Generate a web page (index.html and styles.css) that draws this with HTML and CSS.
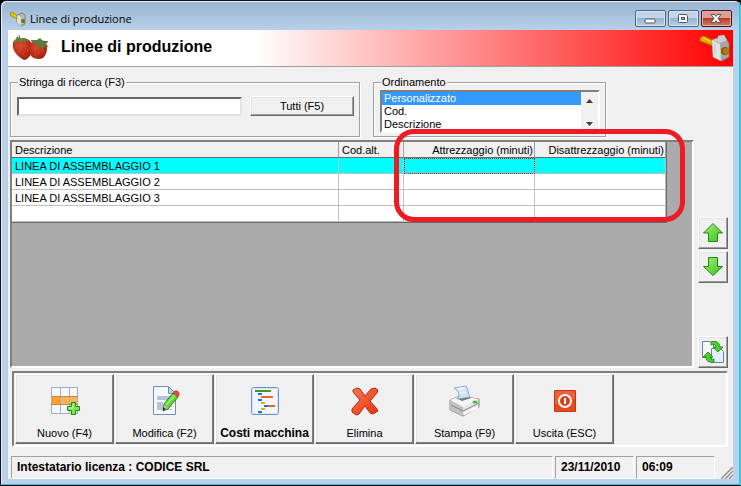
FILE: index.html
```html
<!DOCTYPE html>
<html lang="it">
<head>
  <meta charset="UTF-8" />
  <meta name="viewport" content="width=device-width, initial-scale=1.0"/>
  <title>Linee di produzione</title>
  <link rel="stylesheet" href="styles.css">
</head>
<body>
  <div class="window">
    <div class="titlebar">
      <svg class="app-icon" width="16" height="16" viewBox="0 0 16 16">
        <path d="M0 2l2-1 6 4-1 3-6-3z" fill="#d8c800" stroke="#6a6200" stroke-width=".5"/>
        <path d="M7 4l5-2 3 2v9l-4 2-4-3z" fill="#b8b8b0" stroke="#66665f" stroke-width=".7"/>
        <path d="M7 4l4 2v9l-4-3z" fill="#dcdcd6"/>
        <circle cx="13" cy="10" r="2" fill="#7c7400"/>
      </svg>
      <span class="caption">Linee di produzione</span>
      <button class="win-btn" aria-label="Riduci">
        <svg width="30" height="16" viewBox="0 0 30 16"><rect x="10" y="8" width="10" height="4" rx="1" fill="#fff" stroke="#535666"/></svg>
      </button>
      <button class="win-btn" aria-label="Ingrandisci">
        <svg width="30" height="16" viewBox="0 0 30 16"><rect x="10.500" y="3.500" width="9" height="8" rx="1" fill="#fff" stroke="#535666"/><rect x="13.500" y="6.500" width="3" height="2" fill="#9db8d4" stroke="#535666"/></svg>
      </button>
      <button class="win-btn close" aria-label="Chiudi">
        <svg width="30" height="16" viewBox="0 0 30 16"><path d="M10 3.500h3.500L15 5.500l1.500-2H20L17 7.500l3 4h-3.500l-1.500-2-1.500 2H10l3-4z" fill="#fff" stroke="#535666"/></svg>
      </button>
    </div>

    <div class="client">
      <div class="header">
        <svg width="40" height="28" viewBox="0 0 40 28">
          <defs>
            <radialGradient id="berry" cx=".4" cy=".35" r=".7"><stop offset="0" stop-color="#dc4a2c"/><stop offset="1" stop-color="#a41c10"/></radialGradient>
          </defs>
          <path d="M2 8C4 4 14 3 18 6c4 4 4 9 2 14-2 4-5 6-7 6C9 24 0 18 2 8z" fill="url(#berry)"/>
          <path d="M20 9c2-4 12-4 15 0 2 5 1 11-3 15-4 2-9 1-12-2-2-4-2-9 0-13z" fill="url(#berry)"/>
          <path d="M2 8l3-3 1-3 3 3 5-1 4 3-4 0 1 2-4-2-2 3-2-3-4 3z" fill="#6f7a3c"/>
          <path d="M20 6l6 0 3-2 3 3 5 0-2 3 3 3-5-1-1 4-3-4-3 1 0-3-5-1z" fill="#5d7a40"/>
          <path d="M9 5L8 1M32 7l5 1" stroke="#5b7048" fill="none"/>
          <path d="M5 12h1M9 15h1M13 12h1M7 18h1M12 20h1M16 16h1M24 15h1M27 19h1M31 17h1M24 21h1" stroke="#d8604a"/>
        </svg>
        <h1>Linee di produzione</h1>
        <svg width="32" height="30" viewBox="0 0 32 30">
          <path d="M1 5l4-2 10 5-1 5L1 8z" fill="#e0ac00" stroke="#9c7000" stroke-width=".7"/>
          <path d="M3 4l11 6" stroke="#ffdc4a"/>
          <path d="M13 7l6-2v-2l6-1 3 5 2 3v14l-7 4-9-4z" fill="#a6a6a6" stroke="#777" stroke-width=".7"/>
          <path d="M13 7l6-2v-2l6-1 3 5-7 3z" fill="#cdcdcd"/>
          <path d="M13 7l8 4 1 17-8-4z" fill="#e2e2e2"/>
          <path d="M16 11v11" stroke="#c8c8c8"/>
          <circle cx="26" cy="18" r="4" fill="#8a5a00"/>
          <circle cx="27" cy="18" r="3" fill="#b07c10"/>
        </svg>
      </div>

      <div class="filters">
        <fieldset class="group search">
          <legend><label for="ricerca">Stringa di ricerca (F3)</label></legend>
          <div class="search-row">
            <input type="text" id="ricerca" class="field" />
            <button class="btn">Tutti (F5)</button>
          </div>
        </fieldset>
        <fieldset class="group order">
          <legend><label for="ordinamento">Ordinamento</label></legend>
          <div class="listbox">
            <select id="ordinamento" size="3">
              <option selected>Personalizzato</option>
              <option>Cod.</option>
              <option>Descrizione</option>
            </select>
            <div class="scroll">
              <svg width="7" height="4" viewBox="0 0 7 4"><path d="M0 4L3.500 0 7 4z" fill="#404040"/></svg>
              <svg width="7" height="4" viewBox="0 0 7 4"><path d="M0 0h7L3.500 4z" fill="#404040"/></svg>
            </div>
          </div>
        </fieldset>
      </div>

      <div class="main">
        <div class="grid">
          <table>
            <colgroup>
              <col class="col-desc"><col class="col-cod"><col class="col-min"><col class="col-min">
            </colgroup>
            <thead>
              <tr><th>Descrizione</th><th>Cod.alt.</th><th class="num">Attrezzaggio (minuti)</th><th class="num">Disattrezzaggio (minuti)</th></tr>
            </thead>
            <tbody>
              <tr class="selected"><td>LINEA DI ASSEMBLAGGIO 1</td><td></td><td class="focus"></td><td></td></tr>
              <tr><td>LINEA DI ASSEMBLAGGIO 2</td><td></td><td></td><td></td></tr>
              <tr><td>LINEA DI ASSEMBLAGGIO 3</td><td></td><td></td><td></td></tr>
              <tr><td></td><td></td><td></td><td></td></tr>
            </tbody>
          </table>
          <div class="highlight"></div>
        </div>
        <div class="side">
          <button class="btn square" aria-label="Sposta su">
            <svg width="22" height="22" viewBox="0 0 22 22"><defs><linearGradient id="green" x1="0" y1="0" x2="1" y2="1"><stop offset="0" stop-color="#a4ee74"/><stop offset="1" stop-color="#35c41c"/></linearGradient></defs><path d="M11 1.500L20.500 11h-5v8.500h-9V11h-5z" fill="url(#green)" stroke="#1d8a12"/></svg>
          </button>
          <button class="btn square" aria-label="Sposta giù">
            <svg width="22" height="22" viewBox="0 0 22 22"><path d="M11 19.500L1.500 10.500h5V1.500h9v9h5z" fill="url(#green)" stroke="#1d8a12"/></svg>
          </button>
          <button class="btn square refresh" aria-label="Aggiorna">
            <svg width="24" height="24" viewBox="0 0 24 24">
              <path d="M1.500 1.500h8l3 3v13h-11z" fill="#f4f8ff" stroke="#6480b4"/>
              <path d="M10.500 8.500h9l3 3v11h-12z" fill="#e6efff" stroke="#6480b4"/>
              <path d="M10 2c5-2 9 1 9 5h3l-5 5-5-5h3c0-2-2-3-5-2z" fill="#4fd028" stroke="#168010" stroke-width=".8"/>
              <path d="M13 22c-5 1-8-1-8-5H2l5-5 5 5H9c0 2 2 3 4 2z" fill="#4fd028" stroke="#168010" stroke-width=".8"/>
            </svg>
          </button>
        </div>
      </div>

      <div class="toolbar">
        <button class="btn tool">
          <svg width="32" height="32" viewBox="0 0 32 32">
            <path d="M2 2h27v27H2z" fill="#f7f8ff"/>
            <path d="M2 11h27v9H2z" fill="#ffb54d"/>
            <path d="M2 11h9v9H2z" fill="#ffa126"/>
            <path d="M2.500 2v27M11.500 2v27M20.500 2v27M28.500 2v27M2 2.500h27M2 28.500h27" stroke="#a9aac0" fill="none"/>
            <path d="M2 11.500h27M2 19.500h27" stroke="#b98a54" fill="none"/>
            <path d="M22.500 17.500h4v4h4v4h-4v4h-4v-4h-4v-4h4z" fill="#7ee64c" stroke="#188a12"/>
            <path d="M24 19v4h-4" stroke="#c5ffa6" fill="none"/>
          </svg>
          <span>Nuovo (F4)</span>
        </button>
        <button class="btn tool">
          <svg width="32" height="32" viewBox="0 0 32 32">
            <path d="M4.500 1.500h15l7 7v21h-22z" fill="#f6f9ff" stroke="#6f8cc0"/>
            <path d="M19.500 1.500v7h7z" fill="#b8d2f6" stroke="#6f8cc0"/>
            <path d="M8 11h15v4H8zM8 17h6v8H8zM16 18h7v1h-7zM16 21h7v1h-7zM16 24h7v1h-7z" fill="#b7c3da"/>
            <path d="M14 26l1-7L24 8l5 4-10 12z" fill="#66cf36" stroke="#2b861b"/>
            <path d="M17 20L26 10" stroke="#98ea62" stroke-width="2"/>
            <path d="M14 26l1-6 4 3z" fill="#c8c0a0"/>
            <path d="M14 26v-4l3 2z" fill="#333"/>
            <path d="M24 8c2-4 7-2 6 2l-1 2-5-4z" fill="#e84830" stroke="#b22a1a" stroke-width=".6"/>
          </svg>
          <span>Modifica (F2)</span>
        </button>
        <button class="btn tool strong">
          <svg width="32" height="32" viewBox="0 0 32 32">
            <rect x="2.500" y="2.500" width="27" height="27" rx="2" fill="#f2f7ff" stroke="#7390c8"/>
            <rect x="3.500" y="3.500" width="25" height="25" rx="1" fill="none" stroke="#d2e2fa"/>
            <path d="M6 5h16v2H6z" fill="#3c9c1c"/>
            <path d="M9 8h4v2H9zM9 14h4v2H9zM15 20h4v2h-4zM9 26h4v2H9z" fill="#1474d8"/>
            <path d="M12 11h12v2H12zM19 20h7v2h-7z" fill="#f0622c"/>
            <path d="M12 17h4v2h-4zM12 23h4v2h-4z" fill="#e0aa1a"/>
          </svg>
          <span>Costi macchina</span>
        </button>
        <button class="btn tool">
          <svg width="32" height="32" viewBox="0 0 32 32">
            <defs><linearGradient id="red" x1="0" y1="0" x2="1" y2="1"><stop offset="0" stop-color="#ff7a4c"/><stop offset="1" stop-color="#e03010"/></linearGradient></defs>
            <path d="M4 5l4-2 3 1 5 7 6-7 4-1 3 2-1 3-7 8 7 8 1 2-5 3-3-1-5-7-6 8-3 1-4-3v-3l8-9-7-8z" fill="url(#red)" stroke="#b42a18"/>
          </svg>
          <span>Elimina</span>
        </button>
        <button class="btn tool">
          <svg width="32" height="32" viewBox="0 0 32 32">
            <path d="M1 15l9-4 20 3v8l-16 9-13-6z" fill="#e4e4e4" stroke="#868686"/>
            <path d="M1 15l9-4 20 3-16 8z" fill="#f5f5f5"/>
            <path d="M1 15l13 7v9L1 25z" fill="#c0c0c0"/>
            <path d="M2 20l12 6 16-8" stroke="#858585" fill="none"/>
            <path d="M15 29l14-7" stroke="#fff" stroke-width="2"/>
            <path d="M7 13l6 3 9-3-3-2z" fill="#777"/>
            <path d="M9 14c2-5 0-9-4-11l12-2c3 3 1 7 4 11z" fill="#cfe4fc" stroke="#7e9ccc" stroke-width=".8"/>
            <path d="M9 4l7-1M11 8l6-1" stroke="#eaf5ff" stroke-width="2"/>
            <ellipse cx="26" cy="17" rx="2.500" ry="1.500" fill="#37c42b"/>
          </svg>
          <span>Stampa (F9)</span>
        </button>
        <button class="btn tool">
          <svg width="32" height="32" viewBox="0 0 32 32">
            <rect x="5" y="5" width="22" height="22" rx="1" fill="#e64a20"/>
            <path d="M5 5h22v8L5 20z" fill="#ec6238"/>
            <rect x="5.500" y="5.500" width="21" height="21" rx="1" fill="none" stroke="#b83818"/>
            <circle cx="16" cy="16" r="6" fill="#dc3f1c" stroke="#fff" stroke-width="2"/>
            <path d="M16 13v6" stroke="#fff" stroke-width="2"/>
          </svg>
          <span>Uscita (ESC)</span>
        </button>
      </div>

      <div class="statusbar">
        <div class="panel licence">Intestatario licenza : CODICE SRL</div>
        <div class="panel">23/11/2010</div>
        <div class="panel">06:09</div>
        <svg class="grip" width="12" height="12" viewBox="0 0 12 12">
          <path d="M0 12L12 0M4 12l8-8M8 12l4-4" stroke="#909090" stroke-width="1.500"/>
        </svg>
      </div>
    </div>
  </div>
</body>
</html>
```
FILE: styles.css
```css
* {
  box-sizing: border-box;
}

body {
  margin: 0;
  background: #000;
  font-family: "Liberation Sans", Arial, sans-serif;
  font-size: 11px;
  line-height: 13px;
  color: #000;
}

button,
input,
select {
  font: inherit;
  color: inherit;
}

.window {
  display: flex;
  flex-direction: column;
  min-height: 100vh;
  padding: 0 6px 6px;
  border: 1px solid #111;
  border-right-color: #2fd0ea;
  border-bottom-color: #000;
  border-radius: 6px 6px 0 0;
  background: linear-gradient(#99b4d1, #b9d1ea 30px);
  box-shadow: inset -1px -1px 0 #35c4dc, inset 1px 1px 0 #e8f2fb;
}

/* title bar */
.titlebar {
  display: flex;
  align-items: center;
  gap: 2px;
  height: 29px;
  padding: 6px 2px 0 3px;
}

.caption {
  flex: 1;
  padding-left: 2px;
  font-family: "Open Sans", "Noto Sans", sans-serif;
  font-size: 11px;
  line-height: 16px;
}

.win-btn {
  width: 31px;
  height: 17px;
  padding: 0;
  border: 1px solid #50657f;
  border-radius: 2px;
  background: linear-gradient(#c3d5e8 45%, #98b3d0 50%, #b7cfe8);
  box-shadow: inset 0 0 0 1px #d5e3f2;
}

.win-btn svg {
  display: block;
  margin-left: -1px;
}

.win-btn.close {
  border-color: #43141a;
  background: linear-gradient(#dd9d92 45%, #b83c24 50%, #d08070);
  box-shadow: inset 0 0 0 1px #e3b1a8;
}

.client {
  flex: 1;
  display: flex;
  flex-direction: column;
  margin: 0 1px;
  background: #f0f0f0;
}

.header {
  display: flex;
  align-items: center;
  height: 37px;
  padding: 0 2px 0 3px;
  border-bottom: 1px solid #a0a0a0;
  background: linear-gradient(to right, #fff 34%, #f00);
}

.header h1 {
  flex: 1;
  margin: 0;
  padding: 0 0 2px 10px;
  font-size: 16px;
  line-height: 20px;
}

/* filters */
.filters {
  display: flex;
  gap: 13px;
  padding: 9px 2px 3px;
}

.group {
  min-width: 0;
  height: 61px;
  margin: 0;
  padding: 0 5px 0 6px;
  border: 1px solid #a0a0a0;
  box-shadow: 1px 1px 0 #fff, inset 1px 1px 0 #fff;
}

.group legend {
  margin-left: 1px;
  padding: 0 1px;
  background: #f0f0f0;
}

.search {
  flex: 0 1 350px;
}

.order {
  flex: 0 1 233px;
}

.search-row {
  display: flex;
  align-items: center;
  gap: 8px;
  padding-top: 7px;
}

.field {
  flex: 1;
  min-width: 0;
  height: 19px;
  padding: 0 3px;
  border: 2px solid;
  border-color: #696969 #e3e3e3 #e3e3e3 #696969;
  background: #fff;
}

.btn {
  padding: 0;
  border: 1px solid;
  border-color: #fff #696969 #696969 #fff;
  background: #f0f0f0;
  box-shadow: inset -1px -1px 0 #a0a0a0, inset 1px 1px 0 #e3e3e3;
}

.search-row .btn {
  width: 104px;
  height: 20px;
}

.listbox {
  display: flex;
  height: 43px;
  margin-top: 1px;
  border: 2px solid;
  border-color: #808080 #fff #fff #808080;
  background: #fff;
}

.listbox select {
  flex: 1;
  height: 39px;
  padding: 0;
  border: 0;
  outline: 0;
  border-radius: 0;
  overflow: hidden;
  background: #fff;
}

.listbox option {
  min-height: 13px;
  padding: 0 2px;
}

.listbox option:checked {
  color: #fff;
  background: #3399ff linear-gradient(#3399ff, #3399ff);
}

.scroll {
  display: flex;
  flex-direction: column;
  align-items: center;
  justify-content: space-between;
  width: 17px;
  padding: 7px 0 5px;
  background: #f0f0f0;
}

/* grid */
.main {
  flex: 1;
  display: flex;
  gap: 4px;
  padding: 0 5px 0 2px;
}

.grid {
  position: relative;
  flex: 1;
  border: 2px solid;
  border-color: #808080 #fff #fff #808080;
  background: #ababab;
}

table {
  table-layout: fixed;
  width: 655px;
  border-spacing: 0;
  border-right: 1px solid #696969;
  border-bottom: 1px solid #696969;
}

.col-desc {
  width: 327px;
}

.col-cod {
  width: 65px;
}

.col-min {
  width: 131px;
}

th,
td {
  height: 16px;
  padding: 1px 3px 0;
  border-right: 1px solid #c0c0c0;
  border-bottom: 1px solid #c0c0c0;
  background: #fff;
  font-weight: normal;
  text-align: left;
  white-space: nowrap;
}

th {
  border-right-color: #a0a0a0;
  border-bottom-color: #696969;
  background: #f0f0f0;
}

th.num {
  padding: 1px 1px 0;
  text-align: right;
}

.selected td {
  background: #0ff;
}

td.focus {
  outline: 1px dotted #f00;
  outline-offset: -1px;
}

.highlight {
  position: absolute;
  top: -13px;
  left: 382px;
  width: 291px;
  height: 93px;
  border: 5px solid #ed1c24;
  border-radius: 20px;
}

.side {
  display: flex;
  flex-direction: column;
  gap: 2px;
  padding-top: 77px;
}

.square {
  display: flex;
  align-items: center;
  justify-content: center;
  width: 30px;
  height: 32px;
}

.refresh {
  margin-top: auto;
}

/* toolbar */
.toolbar {
  display: flex;
  gap: 1px;
  margin: 3px 5px 9px 4px;
  padding: 1px;
  border: 2px solid;
  border-color: #808080 #fff #fff #808080;
}

.tool {
  display: flex;
  flex-direction: column;
  align-items: center;
  justify-content: space-between;
  width: 99px;
  height: 70px;
  padding: 10px 0 3px;
  box-shadow: inset -1px -1px 0 #808080, inset 1px 1px 0 #e3e3e3;
}

.strong {
  font-size: 12px;
  font-weight: bold;
}

/* status bar */
.statusbar {
  display: flex;
  gap: 2px;
  padding-left: 3px;
  font-weight: bold;
  font-size: 12px;
}

.panel {
  width: 79px;
  height: 23px;
  padding: 4px 5px;
  border: 1px solid;
  border-color: #a0a0a0 #fff #fff #a0a0a0;
  white-space: nowrap;
}

.licence {
  flex: 1;
}

.grip {
  align-self: flex-end;
  margin-left: 4px;
}
```
